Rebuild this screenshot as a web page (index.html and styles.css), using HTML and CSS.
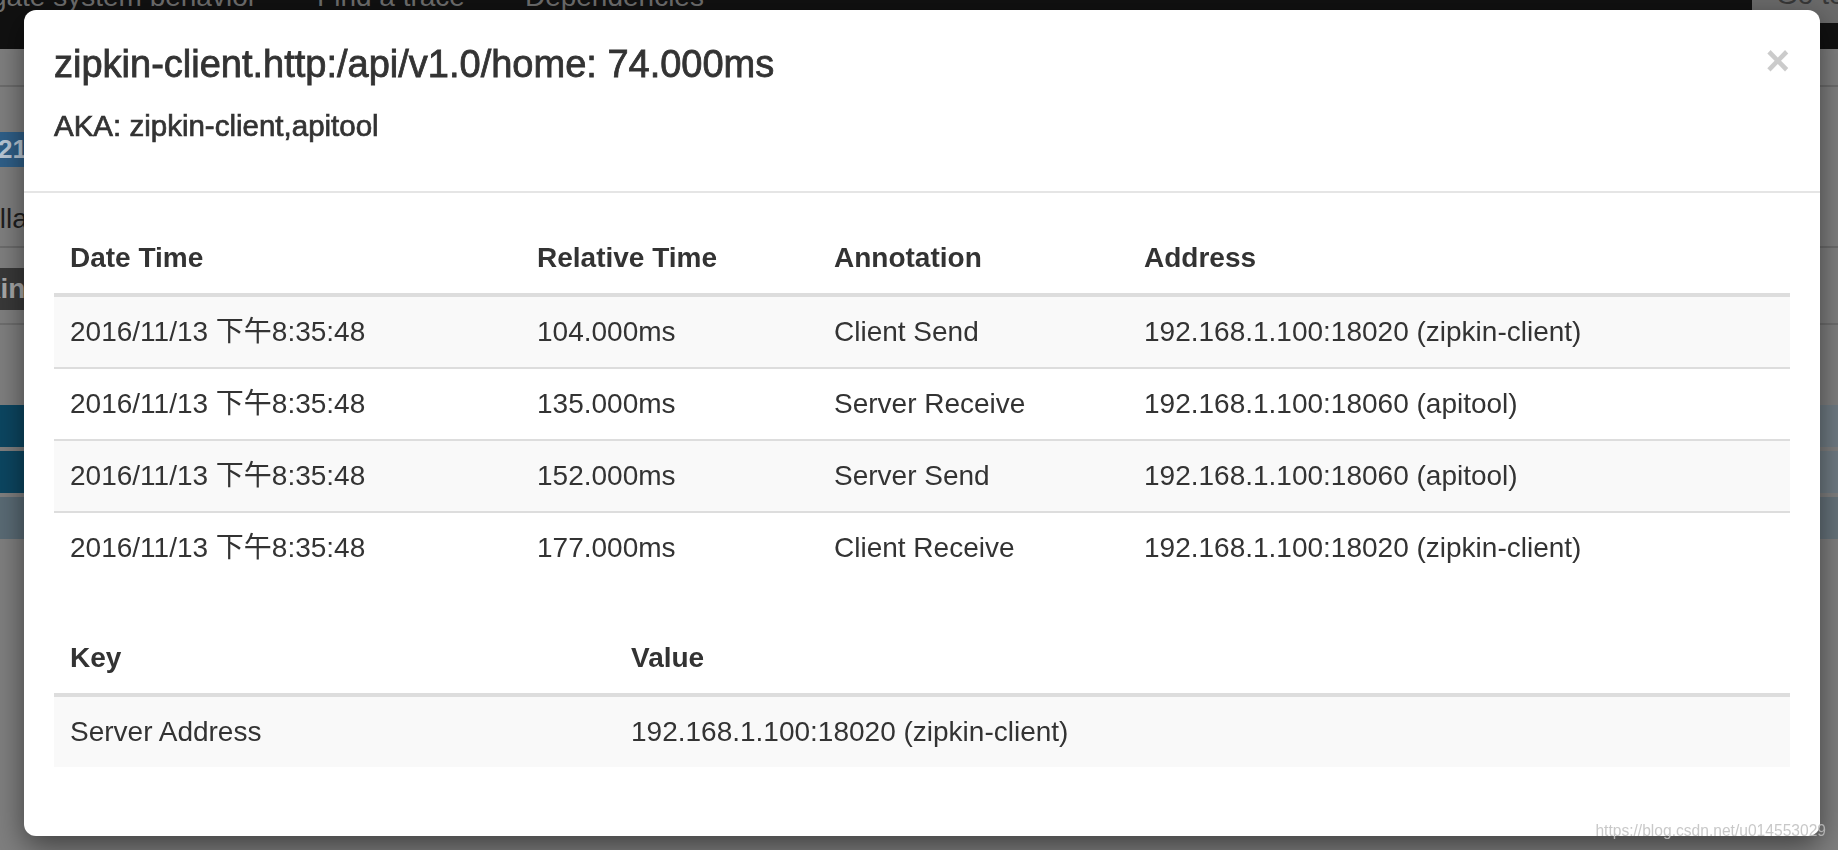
FILE: index.html
```html
<!DOCTYPE html>
<html lang="zh-CN">
<head>
<meta charset="utf-8">
<title>zipkin-client.http:/api/v1.0/home</title>
<link rel="stylesheet" href="styles.css">
</head>
<body>
<div class="page">
  <nav class="navbar">
    <ul class="nav-links">
      <li>Investigate system behavior</li>
      <li>Find a trace</li>
      <li>Dependencies</li>
    </ul>
    <div class="goto"><span class="goto-text">Go to trace</span></div>
  </nav>
  <div class="subbar"></div>
  <div class="trace-head"><span class="trace-badge">216</span></div>
  <div class="controls"><span class="ctl-text">Collapse All</span></div>
  <div class="svc-row"><span class="svc-label">zipkin-client</span></div>
  <div class="rule"></div>
  <div class="spans">
    <div class="span-band"><div class="span-bar"></div></div>
    <div class="span-band"><div class="span-bar"></div></div>
    <div class="span-band span-band-light"><div class="span-bar span-bar-light"></div></div>
  </div>
</div>

<div class="modal">
  <div class="modal-header">
    <div class="title-row">
      <h3 class="modal-title">zipkin-client.http:/api/v1.0/home: 74.000ms</h3>
      <button class="close" type="button">&times;</button>
    </div>
    <h5 class="aka">AKA: zipkin-client,apitool</h5>
  </div>
  <div class="modal-body">
    <table class="table">
      <colgroup>
        <col class="c-date"><col class="c-rel"><col class="c-ann"><col class="c-addr">
      </colgroup>
      <thead>
        <tr><th>Date Time</th><th>Relative Time</th><th>Annotation</th><th>Address</th></tr>
      </thead>
      <tbody>
        <tr><td>2016/11/13 下午8:35:48</td><td>104.000ms</td><td>Client Send</td><td>192.168.1.100:18020 (zipkin-client)</td></tr>
        <tr><td>2016/11/13 下午8:35:48</td><td>135.000ms</td><td>Server Receive</td><td>192.168.1.100:18060 (apitool)</td></tr>
        <tr><td>2016/11/13 下午8:35:48</td><td>152.000ms</td><td>Server Send</td><td>192.168.1.100:18060 (apitool)</td></tr>
        <tr><td>2016/11/13 下午8:35:48</td><td>177.000ms</td><td>Client Receive</td><td>192.168.1.100:18020 (zipkin-client)</td></tr>
      </tbody>
    </table>
    <table class="table">
      <colgroup>
        <col class="c-key"><col class="c-val">
      </colgroup>
      <thead>
        <tr><th>Key</th><th>Value</th></tr>
      </thead>
      <tbody>
        <tr><td>Server Address</td><td>192.168.1.100:18020 (zipkin-client)</td></tr>
      </tbody>
    </table>
  </div>
</div>

<div class="watermark">https://blog.csdn.net/u014553029</div>
</body>
</html>
```

FILE: styles.css
```css
html, body {
  margin: 0;
  padding: 0;
}

body {
  width: 1838px;
  height: 850px;
  overflow: hidden;
  background: #7f7f7f;
  font-family: "Liberation Sans", Arial, "Noto Sans CJK SC", sans-serif;
  color: #333;
}

/* ---------- dimmed page behind the dialog ---------- */
.page {
  height: 850px;
  overflow: hidden;
}

.navbar {
  height: 49px;
  background: #111;
  display: flex;
  justify-content: space-between;
  align-items: flex-start;
  overflow: hidden;
}

.nav-links {
  list-style: none;
  margin: -17px 0 0 -120px;
  padding: 0;
  display: flex;
}

.nav-links li {
  padding: 0 30px;
  font-size: 28px;
  line-height: 28px;
  color: #6e6e6e;
  white-space: nowrap;
}

.goto {
  width: 86px;
  height: 23px;
  padding-left: 24px;
  background: #6b6b6b;
  border-radius: 0 0 0 6px;
  overflow: hidden;
  margin-right: -24px;
}

.goto-text {
  display: block;
  margin-top: -19px;
  font-size: 28px;
  line-height: 28px;
  color: #383838;
  white-space: nowrap;
}

.subbar {
  height: 36px;
  border-bottom: 2px solid #6c6c6c;
}

.trace-head {
  margin-top: 45px;
  height: 35px;
}

.trace-badge {
  display: inline-block;
  height: 35px;
  line-height: 35px;
  padding: 0 12px 0 0;
  margin-left: -2px;
  width: 200px;
  background: #2f5f88;
  color: #b9c8d6;
  font-size: 26px;
  font-weight: bold;
}

.controls {
  height: 47px;
  padding-top: 32px;
  border-bottom: 2px solid #6c6c6c;
}

.ctl-text {
  display: block;
  margin-left: -36px;
  font-size: 28px;
  line-height: 40px;
  color: #1e1e1e;
  white-space: nowrap;
}

.svc-row {
  padding-top: 20px;
  height: 42px;
}

.svc-label {
  display: inline-block;
  height: 42px;
  line-height: 42px;
  margin-left: -66px;
  padding: 0 12px;
  background: #393939;
  color: #a8a8a8;
  font-size: 28px;
  font-weight: bold;
}

.rule {
  margin-top: 13px;
  border-top: 2px solid #6e6e6e;
}

.spans {
  padding-top: 80px;
  display: flex;
  flex-direction: column;
  gap: 4px;
}

.span-band {
  height: 42px;
  background: #6f7b83;
}

.span-bar {
  width: 600px;
  height: 42px;
  background: #0c4661;
}

.span-band-light {
  background: #66737b;
}

.span-bar-light {
  background: #5a6b75;
}

/* ---------- dialog ---------- */
.modal {
  position: fixed;
  top: 10px;
  left: 24px;
  width: 1796px;
  background: #fff;
  border-radius: 12px;
  box-shadow: 0 10px 30px rgba(0, 0, 0, 0.5);
}

.modal-header {
  padding: 30px 30px 45px;
  border-bottom: 2px solid #e5e5e5;
}

.title-row {
  display: flex;
  justify-content: space-between;
  align-items: flex-start;
}

.modal-title {
  margin: 0;
  font-size: 38px;
  line-height: 48px;
  font-weight: normal;
  color: #333;
  -webkit-text-stroke: 0.8px #333;
}

.close {
  margin: 0;
  padding: 0;
  border: 0;
  background: none;
  font-family: "Liberation Sans", Arial, sans-serif;
  font-size: 42px;
  font-weight: bold;
  line-height: 42px;
  color: #000;
  opacity: 0.2;
  text-shadow: 0 2px 0 #fff;
}

.aka {
  margin: 18px 0 0;
  font-size: 29.5px;
  line-height: 40px;
  font-weight: normal;
  color: #333;
  -webkit-text-stroke: 0.7px #333;
}

.modal-body {
  padding: 30px 30px 29px;
}

.table {
  width: 100%;
  table-layout: fixed;
  border-collapse: separate;
  border-spacing: 0;
  margin-bottom: 40px;
  font-size: 28px;
  line-height: 40px;
}

.table:last-child {
  margin-bottom: 40px;
}

.c-date { width: 467px; }
.c-rel { width: 297px; }
.c-ann { width: 310px; }
.c-addr { width: 662px; }
.c-key { width: 561px; }
.c-val { width: 1175px; }

.table th {
  text-align: left;
  font-weight: bold;
  padding: 15px 16px;
  border-bottom: 4px solid #ddd;
  white-space: nowrap;
}

.table td {
  padding: 15px 16px;
  border-top: 2px solid #ddd;
  white-space: nowrap;
}

.table tbody tr:first-child td {
  border-top: 0;
}

.table tbody tr:nth-child(odd) td {
  background: #f9f9f9;
}

/* ---------- watermark ---------- */
.watermark {
  position: fixed;
  right: 12px;
  bottom: 11px;
  font-size: 15.6px;
  line-height: 16px;
  color: rgba(190, 190, 190, 0.85);
  white-space: nowrap;
}
```
